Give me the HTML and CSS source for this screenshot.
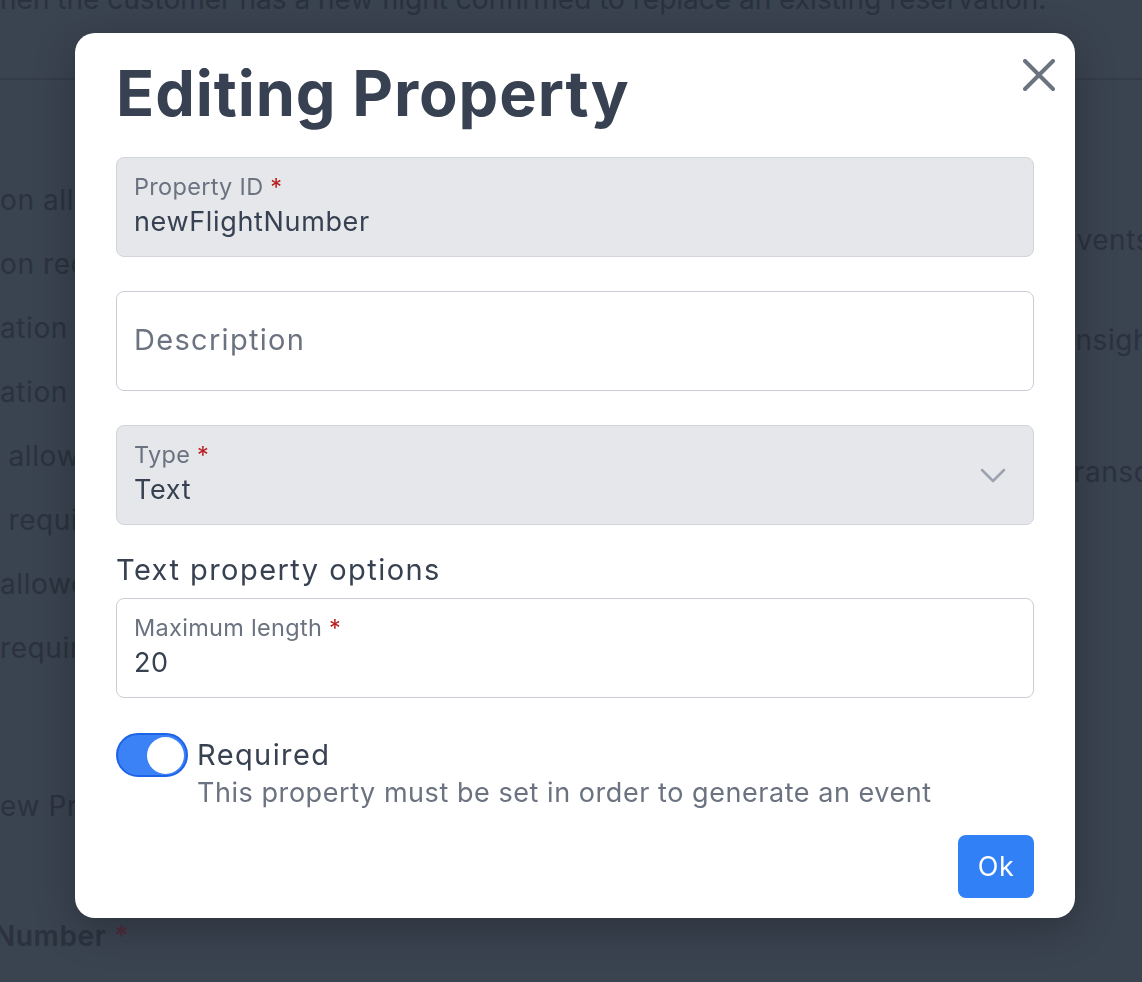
FILE: index.html
```html
<!DOCTYPE html>
<html lang="en">
<head>
    <meta charset="UTF-8">
    <meta name="viewport" content="width=device-width, initial-scale=1.0">
    <title>Editing Property</title>
    <link rel="stylesheet" href="styles.css">
</head>
<body>
    <!-- Page behind the modal -->
    <div class="page">
        <p class="page-intro">hen the customer has a new flight confirmed to replace an existing reservation.</p>
        <div class="page-body">
            <div class="col-left">
                <div class="row">on allowed</div>
                <div class="row">on required</div>
                <div class="row">ation allowed</div>
                <div class="row">ation required</div>
                <div class="row">&nbsp;allowed</div>
                <div class="row">&nbsp;required</div>
                <div class="row">allowed</div>
                <div class="row">required</div>
                <div class="row new-prop">ew Property</div>
                <div class="row number">Number <span class="req">*</span></div>
            </div>
            <div class="col-right">
                <div class="desc desc-1">events</div>
                <div class="desc desc-2">insights</div>
                <div class="desc desc-3">transcripts</div>
            </div>
        </div>
    </div>

    <!-- Modal -->
    <div class="overlay">
        <div class="modal">
            <button class="close-btn" aria-label="Close">
                <svg width="32" height="32" viewBox="0 0 32 32" fill="none" stroke="currentColor" stroke-width="4" stroke-linecap="round">
                    <path d="M2 2L30 30M30 2L2 30"/>
                </svg>
            </button>
            <h1>Editing Property</h1>

            <div class="field field-disabled">
                <label>Property ID <span class="req">*</span></label>
                <div class="value">newFlightNumber</div>
            </div>

            <div class="field field-plain">
                <span class="placeholder">Description</span>
            </div>

            <div class="field field-disabled field-select">
                <div class="select-text">
                    <label>Type <span class="req">*</span></label>
                    <div class="value">Text</div>
                </div>
                <svg class="chevron" width="26" height="15" viewBox="0 0 26 15" fill="none" stroke="currentColor" stroke-width="2.5" stroke-linecap="round" stroke-linejoin="round">
                    <path d="M2 2L13 13L24 2"/>
                </svg>
            </div>

            <h2 class="section-title">Text property options</h2>

            <div class="field field-white">
                <label>Maximum length <span class="req">*</span></label>
                <div class="value">20</div>
            </div>

            <div class="toggle-row">
                <div class="toggle"><span class="knob"></span></div>
                <div class="toggle-text">
                    <div class="toggle-label">Required</div>
                    <div class="toggle-desc">This property must be set in order to generate an event</div>
                </div>
            </div>

            <div class="actions">
                <button class="btn-ok">Ok</button>
            </div>
        </div>
    </div>
</body>
</html>
```

FILE: styles.css
```css
* {
    margin: 0;
    padding: 0;
    box-sizing: border-box;
    font-family: 'Inter', 'Noto Sans', sans-serif;
}

body {
    background: #3a4350;
    height: 982px;
    overflow: hidden;
}

/* Background page (dimmed) */
.page {
    color: #2a323e;
    font-size: 28px;
}

.page-intro {
    line-height: 36px;
    margin-top: -19px;
    padding-bottom: 61px;
    border-bottom: 2px solid #343c48;
    white-space: nowrap;
}

.page-body {
    display: flex;
}

.col-left {
    width: 1060px;
    flex-shrink: 0;
    padding-top: 102px;
    font-size: 28px;
    letter-spacing: 0.6px;
}

.row {
    height: 64px;
    line-height: 36px;
    white-space: nowrap;
}

.new-prop {
    margin-top: 94px;
}

.number {
    margin-top: 66px;
    margin-left: -6px;
    font-weight: 600;
}

.number .req {
    color: #4a2e3c;
}

.col-right {
    padding-top: 142px;
    font-size: 28px;
    letter-spacing: 0.6px;
}

.desc {
    line-height: 36px;
    white-space: nowrap;
}

.desc-2 {
    margin-top: 64px;
    margin-left: 8px;
}

.desc-3 {
    margin-top: 96px;
    margin-left: 4px;
}

/* Modal */
.overlay {
    position: fixed;
    top: 0;
    left: 0;
    width: 100%;
    height: 100%;
    display: flex;
    justify-content: center;
    align-items: flex-start;
    padding: 33px 0 0 8px;
}

.modal {
    position: relative;
    width: 1000px;
    background: white;
    border-radius: 20px;
    padding: 23px 41px 20px;
    box-shadow: 0 10px 40px rgba(0, 0, 0, 0.25);
}

.close-btn {
    position: absolute;
    top: 26px;
    right: 20px;
    background: none;
    border: none;
    color: #6b7280;
    display: flex;
    cursor: pointer;
}

.modal h1 {
    font-size: 63px;
    line-height: 74px;
    font-weight: 700;
    letter-spacing: 0.9px;
    color: #374151;
    margin-bottom: 27px;
}

.field {
    height: 100px;
    border: 1px solid #d1d5db;
    border-radius: 8px;
    padding: 12px 17px;
    margin-bottom: 34px;
}

.field label {
    display: block;
    font-size: 23.5px;
    line-height: 34px;
    letter-spacing: 0.3px;
    color: #6b7280;
}

.req {
    color: #b91c1c;
}

.field .value {
    font-size: 27px;
    line-height: 36px;
    letter-spacing: 0.65px;
    color: #374151;
}

.field-disabled {
    background: #e5e7eb;
}

.field-plain {
    display: flex;
    align-items: center;
    padding-bottom: 16px;
    border-color: #c9ced6;
}

.field-white {
    border-color: #c9ced6;
    margin-bottom: 35px;
}

.placeholder {
    font-size: 29px;
    letter-spacing: 1.3px;
    color: #6b7280;
}

.field-select {
    display: flex;
    justify-content: space-between;
    align-items: center;
    padding-right: 27px;
    margin-bottom: 27px;
}

.select-text {
    align-self: flex-start;
}

.chevron {
    color: #9ca3af;
}

.section-title {
    font-size: 29px;
    line-height: 36px;
    font-weight: 400;
    letter-spacing: 1.45px;
    color: #374151;
    margin-bottom: 10px;
}

.toggle-row {
    display: flex;
    gap: 9px;
}

.toggle {
    width: 72px;
    height: 44px;
    border-radius: 22px;
    background: #3b82f6;
    border: 2px solid #1d63e8;
    display: flex;
    align-items: center;
    justify-content: flex-end;
    padding-right: 2px;
}

.knob {
    width: 37px;
    height: 37px;
    border-radius: 50%;
    background: white;
}

.toggle-text {
    padding-top: 4px;
}

.toggle-label {
    font-size: 29px;
    line-height: 36px;
    letter-spacing: 1.4px;
    color: #374151;
}

.toggle-desc {
    font-size: 27px;
    line-height: 34px;
    margin-top: 3px;
    letter-spacing: 0.55px;
    color: #6b7280;
}

.actions {
    display: flex;
    justify-content: flex-end;
    margin-top: 25px;
}

.btn-ok {
    height: 63px;
    width: 76px;
    background: #3280f6;
    color: white;
    border: none;
    border-radius: 8px;
    font-size: 27px;
    letter-spacing: 0.5px;
    cursor: pointer;
}
```
